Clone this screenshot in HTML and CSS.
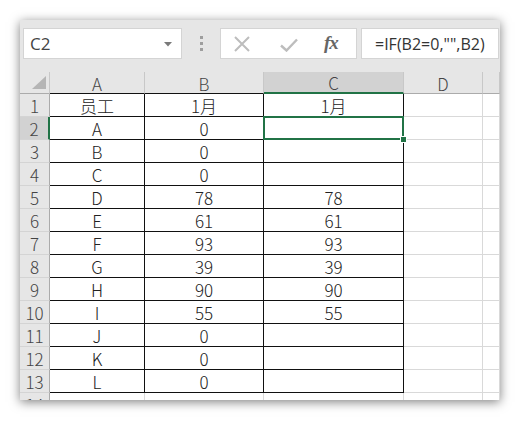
FILE: index.html
```html
<!DOCTYPE html>
<html lang="zh">
<head>
<meta charset="utf-8">
<link rel="stylesheet" href="styles.css">
</head>
<body>
<div class="window">
  <div class="fbar">
    <div class="namebox">
      <span>C2</span>
      <svg class="caret" width="8" height="5" viewBox="0 0 8 5"><path d="M0 0 H8 L4 4.5 Z" fill="#7a7a7a"/></svg>
    </div>
    <div class="dots"><i></i><i></i><i></i></div>
    <div class="btns">
      <svg class="ic-x" width="16" height="16" viewBox="0 0 16 16"><path d="M1 1 L15 15 M15 1 L1 15" stroke="#bdbdbd" stroke-width="2" fill="none"/></svg>
      <svg class="ic-ok" width="18" height="14" viewBox="0 0 18 14"><path d="M1 7.5 L6.5 12.5 L17 1.5" stroke="#bdbdbd" stroke-width="2.4" fill="none"/></svg>
      <span class="fx">fx</span>
    </div>
    <div class="formula">=IF(B2=0,"",B2)</div>
  </div>
  <div class="grid">
    <div class="corner"></div>
    <div class="ch">A</div>
    <div class="ch">B</div>
    <div class="ch sel">C</div>
    <div class="ch">D</div>
    <div class="ch last"></div>

    <div class="rh">1</div><div class="c t">员工</div><div class="c t">1月</div><div class="c t">1月</div><div class="c g"></div><div class="c g"></div>
    <div class="rh sel">2</div><div class="c t">A</div><div class="c t">0</div><div class="c t active"><span class="selbox"></span><span class="handle"></span></div><div class="c g"></div><div class="c g"></div>
    <div class="rh">3</div><div class="c t">B</div><div class="c t">0</div><div class="c t"></div><div class="c g"></div><div class="c g"></div>
    <div class="rh">4</div><div class="c t">C</div><div class="c t">0</div><div class="c t"></div><div class="c g"></div><div class="c g"></div>
    <div class="rh">5</div><div class="c t">D</div><div class="c t">78</div><div class="c t">78</div><div class="c g"></div><div class="c g"></div>
    <div class="rh">6</div><div class="c t">E</div><div class="c t">61</div><div class="c t">61</div><div class="c g"></div><div class="c g"></div>
    <div class="rh">7</div><div class="c t">F</div><div class="c t">93</div><div class="c t">93</div><div class="c g"></div><div class="c g"></div>
    <div class="rh">8</div><div class="c t">G</div><div class="c t">39</div><div class="c t">39</div><div class="c g"></div><div class="c g"></div>
    <div class="rh">9</div><div class="c t">H</div><div class="c t">90</div><div class="c t">90</div><div class="c g"></div><div class="c g"></div>
    <div class="rh">10</div><div class="c t">I</div><div class="c t">55</div><div class="c t">55</div><div class="c g"></div><div class="c g"></div>
    <div class="rh">11</div><div class="c t">J</div><div class="c t">0</div><div class="c t"></div><div class="c g"></div><div class="c g"></div>
    <div class="rh">12</div><div class="c t">K</div><div class="c t">0</div><div class="c t"></div><div class="c g"></div><div class="c g"></div>
    <div class="rh">13</div><div class="c t">L</div><div class="c t">0</div><div class="c t"></div><div class="c g"></div><div class="c g"></div>
    <div class="rh">14</div><div class="c g"></div><div class="c g"></div><div class="c g"></div><div class="c g"></div><div class="c g"></div>
  </div>
</div>
</body>
</html>
```
FILE: styles.css
```css
* { box-sizing: border-box; }
body {
  margin: 0;
  padding: 20px;
  background: #ffffff;
}
.window {
  width: 480px;
  height: 380px;
  overflow: hidden;
  background: #ffffff;
  box-shadow: 0 2px 10px rgba(0, 0, 0, 0.5);
}
.fbar {
  height: 52px;
  background: #e6e6e6;
  display: flex;
  align-items: flex-start;
  padding: 8px 1px 0 3px;
  font-family: "Open Sans", "Noto Sans", sans-serif;
}
.namebox {
  width: 159px;
  height: 31px;
  background: #ffffff;
  border: 1px solid #d4d4d4;
  display: flex;
  align-items: center;
  justify-content: space-between;
  padding: 0 9px 0 6px;
  font-size: 17px;
  color: #444;
}
.caret { margin-top: 1px; }
.dots {
  width: 38px;
  height: 31px;
  display: flex;
  flex-direction: column;
  align-items: center;
  justify-content: center;
  gap: 3px;
}
.dots i {
  display: block;
  width: 3px;
  height: 3px;
  background: #9e9e9e;
}
.btns {
  width: 137px;
  height: 31px;
  background: #ffffff;
  border: 1px solid #d4d4d4;
  display: flex;
  align-items: center;
  padding-left: 13px;
}
.ic-x { margin-right: 30px; }
.ic-ok { margin-right: 26px; margin-top: 2px; }
.fx {
  font-family: "Liberation Serif", "DejaVu Serif", serif;
  font-style: italic;
  font-weight: bold;
  font-size: 19px;
  color: #666;
  letter-spacing: -1px;
  margin-top: -1px;
}
.formula {
  flex: 1;
  height: 31px;
  margin-left: 4px;
  background: #ffffff;
  border: 1px solid #d4d4d4;
  display: flex;
  align-items: center;
  padding-left: 13px;
  font-size: 16px;
  color: #333;
}
.grid {
  display: grid;
  grid-template-columns: 30px 95px 119px 140px 79px 17px;
  grid-template-rows: 22px repeat(14, 23px);
  font-family: "Noto Sans CJK SC", "Noto Sans", sans-serif;
  font-weight: 300;
  font-size: 17px;
  line-height: 19px;
}
.corner {
  background: #e6e6e6;
  border-right: 1px solid #c8c8c8;
  border-bottom: 1px solid #ababab;
  position: relative;
}
.corner::after {
  content: "";
  position: absolute;
  right: 3px;
  bottom: 4px;
  width: 0;
  height: 0;
  border-left: 14px solid transparent;
  border-bottom: 13px solid #b5b5b5;
}
.ch {
  background: #e6e6e6;
  border-right: 1px solid #c8c8c8;
  border-bottom: 1px solid #111;
  display: flex;
  align-items: center;
  justify-content: center;
  color: #444;
  padding-top: 1px;
}
.ch:nth-child(5), .ch.last { border-bottom-color: #ababab; }
.ch.sel {
  background: #d2d2d2;
  border-bottom: 2px solid #217346;
}
.rh {
  background: #e6e6e6;
  border-right: 1px solid #ababab;
  border-bottom: 1px solid #d4d4d4;
  display: flex;
  align-items: center;
  justify-content: center;
  color: #444;
  padding-top: 1px;
}
.rh.sel {
  background: #d2d2d2;
  border-right: 2px solid #217346;
}
.c {
  display: flex;
  align-items: center;
  justify-content: center;
  color: #222;
  padding-top: 1px;
}
.c.t {
  border-right: 1px solid #111;
  border-bottom: 1px solid #111;
}
.c.g {
  border-right: 1px solid #d9d9d9;
  border-bottom: 1px solid #d9d9d9;
}
.active { position: relative; }
.selbox {
  position: absolute;
  left: -1px;
  top: -1px;
  right: -1px;
  bottom: -1px;
  border: 2px solid #217346;
}
.handle {
  position: absolute;
  right: -4px;
  bottom: -4px;
  width: 7px;
  height: 7px;
  background: #217346;
  border: 1px solid #ffffff;
}
```
